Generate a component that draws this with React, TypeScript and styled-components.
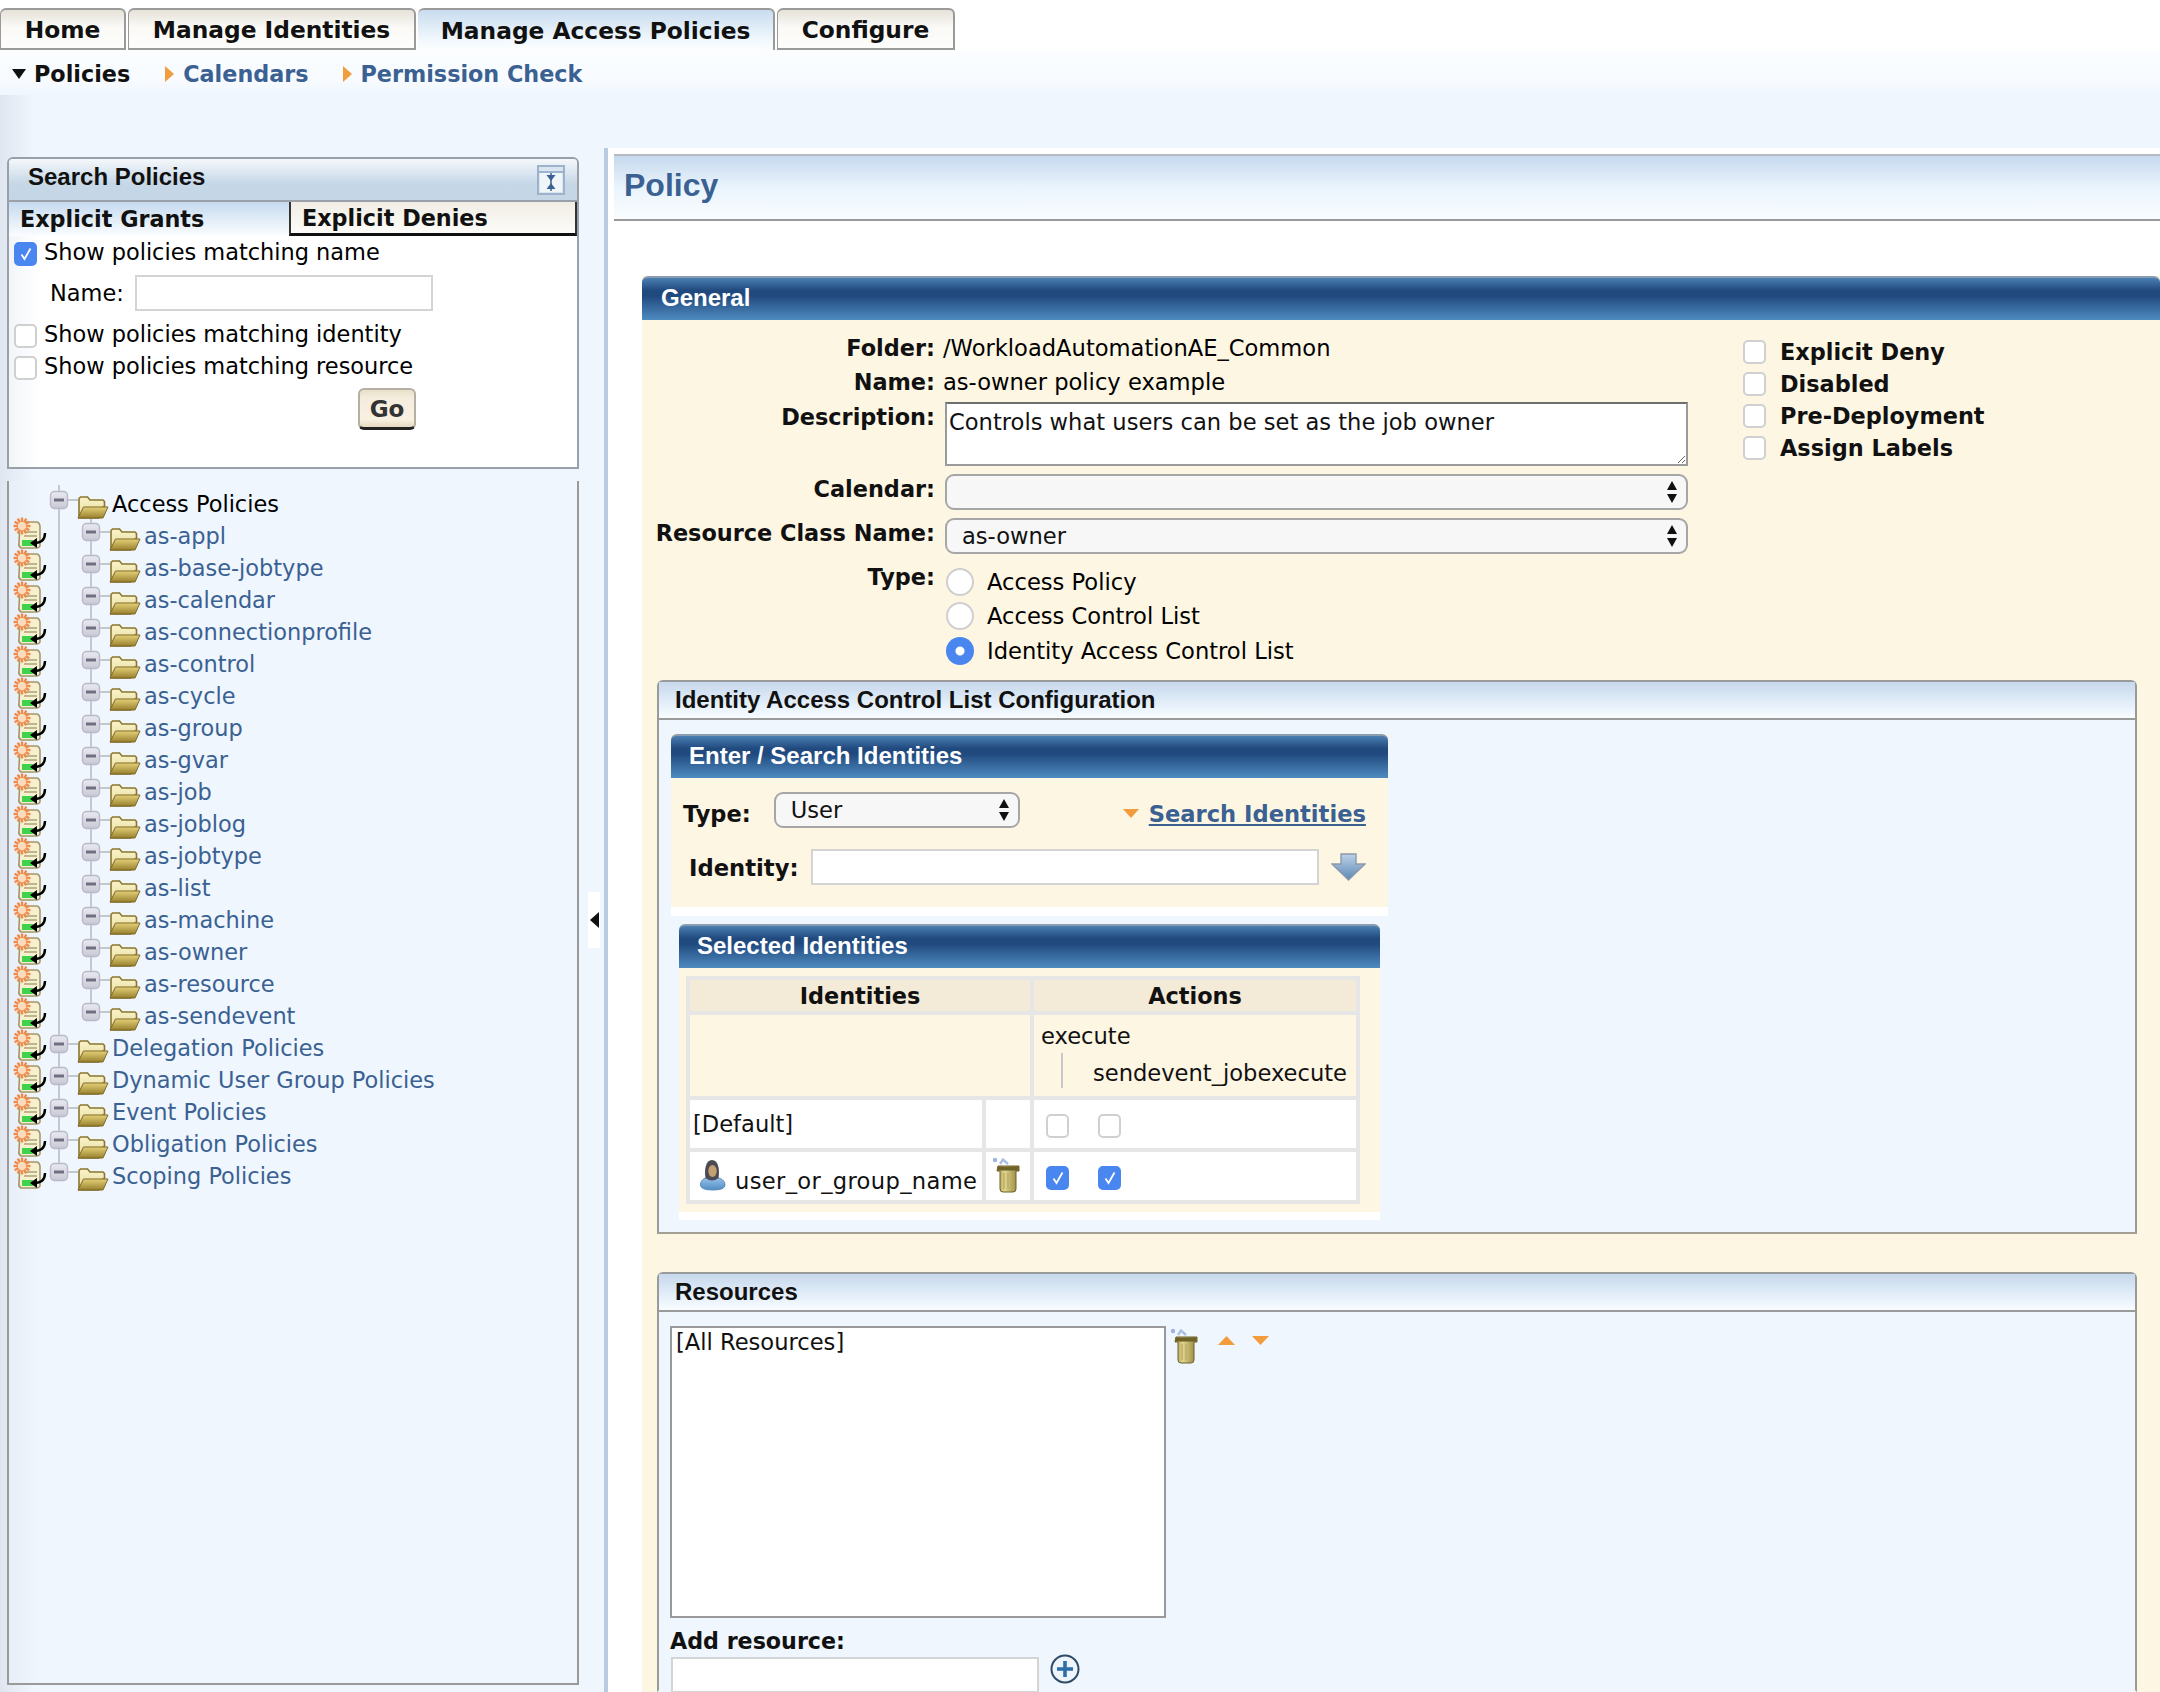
import React from 'react';
import styled, { createGlobalStyle } from 'styled-components';

const VERDANA = '"DejaVu Sans", Verdana, sans-serif';
const HELV = '"Liberation Sans", Arial, sans-serif';
const LINK = '#3a6192';
const PAGE = '#eff6fe';
const CREAM = '#fdf6e3';

const Global = createGlobalStyle`
  html, body { margin: 0; padding: 0; width: 2160px; height: 1692px; overflow: hidden; background: ${PAGE}; }
  body { font-family: ${VERDANA}; font-size: 22.6px; color: #000; }
  * { box-sizing: border-box; }
`;

const Page = styled.div`
  width: 2160px; height: 1692px; display: flex; flex-direction: column; overflow: hidden;
`;
const TabBar = styled.nav`
  display: flex; gap: 2px; height: 50px; padding-top: 8px; background: #fff; flex: none;
`;
const TopTab = styled.div<{ $w: number; $active?: boolean }>`
  width: ${p => p.$w}px; height: 42px; display: flex; align-items: center; justify-content: center;
  font-weight: bold; font-size: 23.3px; color: #111;
  border: 2px solid #9a9a9a; border-left-width: ${p => (p.$active ? 0 : 1)}px;
  border-bottom-width: ${p => (p.$active ? 0 : 2)}px;
  border-radius: 6px 6px 0 0;
  background: ${p => p.$active
    ? 'linear-gradient(#c9dcef, #f4fafe 80%, #fbfdff)'
    : 'linear-gradient(#e6e2d8, #faf9f6 45%, #fdfdfb)'};
`;
const SubNav = styled.nav`
  display: flex; align-items: center; height: 45px; padding-top: 2px; flex: none;
  background: linear-gradient(#fbfdff, #f7fbff 70%, ${PAGE});
`;
const SubItem = styled.div<{ $x: number; $gap: number; $active?: boolean }>`
  display: flex; align-items: center; gap: ${p => p.$gap}px; margin-left: ${p => p.$x}px;
  font-weight: bold; font-size: 22.3px; color: ${p => (p.$active ? '#111' : LINK)};
`;
const Main = styled.div`
  flex: 1; display: flex; min-height: 0;
`;
const Sidebar = styled.aside`
  width: 580px; flex: none; padding: 62px 0 0 7px; font-size: 22.45px;
  background: linear-gradient(90deg, #dfe6ef, ${PAGE} 34px);
`;
const SearchBox = styled.section`
  width: 572px; height: 312px; border: 2px solid #9aa0a8; border-radius: 6px 6px 0 0;
  background: linear-gradient(90deg, #f2f5f9, #fff 30px);
  display: flex; flex-direction: column;
`;
const SearchHead = styled.header`
  height: 41px; flex: none; display: flex; align-items: center; justify-content: space-between;
  padding: 0 12px 5px 19px;
  font: bold 24px ${HELV}; color: #111;
  background: linear-gradient(#f5f8fb, #c6d7e7 60%, #c4d5e6);
  border-radius: 4px 4px 0 0;
  svg { margin-top: 5px; }
`;
const SubTabs = styled.div`
  display: flex; height: 36px; flex: none; border-top: 2px solid #9aa0a8;
`;
const SubTab = styled.div<{ $active?: boolean }>`
  display: flex; align-items: center; font-weight: bold; font-size: 22.3px; color: #111;
  ${p => p.$active
    ? `width: 280px; padding-left: 11px; background: linear-gradient(#c6daef, #fbfdff);`
    : `flex: 1; padding-left: 11px; border-left: 2px solid #333; border-right: 2px solid #333; border-bottom: 3px solid #111;
       background: linear-gradient(#f0ede4, #fdfcf9);`}
`;
const SearchForm = styled.div`
  flex: 1; display: flex; flex-direction: column; padding: 3px 0 0 5px;
`;
const Option = styled.label<{ $top?: number }>`
  display: flex; align-items: flex-start; gap: 7px; height: 32px; line-height: 26px;
  margin-top: ${p => p.$top ?? 0}px;
  input { margin-top: 3px; }
`;
const NameRow = styled.div`
  display: flex; align-items: center; gap: 11px; height: 36px; margin: 4px 0 0 36px;
`;
const TextBox = styled.input.attrs({ type: 'text' })<{ $w: number }>`
  width: ${p => p.$w}px; height: 36px; border: 2px solid #d4d4d4; background: #fff; margin: 0; outline: none; flex: none;
`;
const GoRow = styled.div`
  display: flex; justify-content: flex-end; padding-right: 161px; margin-top: 3px;
`;
const GoButton = styled.button`
  width: 58px; height: 42px; padding: 0; font: bold 23px ${VERDANA}; color: #333;
  border: 2px solid #b5b0a3; border-bottom: 3px solid #222; border-radius: 6px;
  background: linear-gradient(#e9dfca, #f4ecdc 20%, #f8f0e0 80%, #e4d9c2);
`;
const TreeBox = styled.section`
  width: 572px; height: 1204px; margin-top: 12px; padding-top: 7px;
  border: 2px solid #9a9a9a; border-top: 0;
  background: linear-gradient(90deg, #e9eff7, ${PAGE} 34px);
`;
const TreeRow = styled.div<{ $active?: boolean }>`
  display: flex; align-items: center; height: 32px;
  color: ${p => (p.$active ? '#000' : LINK)};
  svg { flex: none; overflow: visible; align-self: flex-start; }
`;
const Splitter = styled.div`
  width: 28px; flex: none; margin-top: 53px; display: flex; align-items: center; justify-content: flex-start;
  padding-left: 8px; border-right: 4px solid #b9cbe0;
`;
const SplitHandle = styled.button`
  width: 12px; height: 56px; padding: 0; border: 0; background: #fff; display: flex; align-items: center; justify-content: center;
`;
const Content = styled.main`
  flex: 1; min-width: 0; margin-top: 53px; background: #fff; display: flex; flex-direction: column; padding-top: 6px;
`;
const PolicyHead = styled.h1`
  margin: 0 0 55px 6px; height: 67px; padding: 0 0 4px 10px; display: flex; align-items: center; flex: none;
  font: bold 32px ${HELV}; color: ${LINK};
  border-top: 2px solid #b8bcc2; border-bottom: 2px solid #9a9a9a;
  background: linear-gradient(#c6d9ee, #eaf4fc 50%, #fafdff);
`;
const GeneralPanel = styled.section`
  margin-left: 34px; flex: 1; display: flex; flex-direction: column; background: ${CREAM}; min-height: 0;
`;
const BlueBar = styled.header<{ $pad?: number }>`
  height: 44px; flex: none; display: flex; align-items: center; padding: 0 0 2px ${p => p.$pad ?? 18}px;
  font: bold 24px ${HELV}; color: #fff;
  border-top: 2px solid #8a9cb0; border-radius: 6px 6px 0 0;
  background: linear-gradient(#4b7fb2, #20497e 30%, #20497e 42%, #4f8bc0);
`;
const GeneralTop = styled.div`
  display: flex; padding-top: 11px; flex: none;
`;
const FormCol = styled.div`
  width: 1046px; flex: none;
`;
const FormRow = styled.div<{ $top?: number; $h: number }>`
  display: grid; grid-template-columns: 293px 1fr; column-gap: 8px; height: ${p => p.$h}px;
  margin-top: ${p => p.$top ?? 0}px; line-height: ${p => p.$h}px;
`;
const FieldLabel = styled.div<{ $lh?: number }>`
  text-align: right; font-weight: bold; font-size: 22.4px; color: #111;
  ${p => (p.$lh ? `line-height: ${p.$lh}px;` : '')}
`;
const Notes = styled.textarea`
  width: 743px; height: 64px; margin: 0 0 0 2px; padding: 3px 2px; display: block;
  font: 22.6px/30px ${VERDANA}; color: #111; background: #fff; outline: none;
  border: 2px solid #9a9a9a; border-top-color: #6f6f6f;
`;
const updown = `url("data:image/svg+xml,%3Csvg xmlns='http://www.w3.org/2000/svg' width='10' height='24'%3E%3Cpath d='M5 1l5 9H0zM5 23l5-9H0z' fill='%23111'/%3E%3C/svg%3E")`;
const DropDown = styled.select<{ $w: number; $left?: number }>`
  appearance: none; width: ${p => p.$w}px; height: 36px; margin: 0 0 0 ${p => p.$left ?? 0}px; padding: 0 30px 0 15px; flex: none;
  font: 22.6px ${VERDANA}; color: #111; display: block; outline: none;
  border: 2px solid #a6a6a6; border-radius: 9px;
  background: #f7f7f7 ${updown} no-repeat right 9px center;
`;
const RadioCol = styled.div`
  display: flex; flex-direction: column; padding-top: 1px; margin-left: 3px;
`;
const RadioRow = styled.label`
  display: flex; align-items: center; gap: 13px; height: 34.3px; line-height: 34px;
`;
const Radio = styled.input.attrs({ type: 'radio', name: 'ptype' })`
  appearance: none; margin: 0; width: 28px; height: 28px; border-radius: 50%; flex: none;
  border: 2px solid #cfcfcf; background: #fff;
  &:checked { border: 0; background: radial-gradient(circle, #fff 0 4px, #4a86ef 5px); }
`;
const checkmark = `url("data:image/svg+xml,%3Csvg xmlns='http://www.w3.org/2000/svg' width='16' height='16'%3E%3Cpath d='M3.5 8.5l3 4.5L12.5 2.5' fill='none' stroke='white' stroke-width='1.8'/%3E%3C/svg%3E")`;
const Check = styled.input.attrs({ type: 'checkbox' })`
  appearance: none; margin: 0; width: 23px; height: 24px; border-radius: 5px; flex: none;
  border: 2px solid #d0d0d0; background: #fff;
  &:checked { border-color: #4a86ef; background: #4a86ef ${checkmark} no-repeat center; }
`;
const FlagsCol = styled.div`
  margin-left: 55px; padding-top: 5px; display: flex; flex-direction: column;
`;
const Flag = styled.label`
  display: flex; align-items: center; gap: 14px; height: 32px; font-weight: bold; font-size: 22.4px; color: #111;
`;
const SubPanel = styled.section<{ $h?: number; $top: number }>`
  margin: ${p => p.$top}px 23px 0 15px; flex: ${p => (p.$h ? 'none' : '1')}; ${p => (p.$h ? `height: ${p.$h}px;` : 'min-height: 0;')}
  display: flex; flex-direction: column; background: ${PAGE};
  border: 2px solid #9a9a9a; border-bottom-color: ${p => (p.$h ? '#a39f92' : 'transparent')};
  border-radius: 6px 6px 0 0;
`;
const SubPanelHead = styled.header`
  height: 38px; flex: none; display: flex; align-items: center; padding-left: 16px;
  font: bold 24px ${HELV}; color: #111; border-bottom: 2px solid #9a9a9a;
  background: linear-gradient(#c6d8ec, #eef6fd 80%, #f8fcff);
`;
const EnterPanel = styled.section`
  width: 717px; margin: 14px 0 0 12px; border-bottom: 9px solid #fff; background: ${CREAM}; flex: none;
`;
const EnterBody = styled.div`
  height: 129px; padding: 14px 0 0 12px;
`;
const TypeRow = styled.div`
  display: flex; align-items: center; height: 36px; font-weight: bold; font-size: 22.5px; color: #111;
`;
const TypeCaption = styled.span`
  padding-top: 7px;
`;
const SearchLink = styled.a`
  margin-left: 10px; font-weight: bold; font-size: 22.6px; color: ${LINK}; text-decoration: underline; white-space: nowrap;
`;
const SearchToggle = styled.div`
  display: flex; align-items: center; margin-left: 103px; padding-top: 7px;
`;
const IdentityRow = styled.div`
  display: flex; align-items: center; height: 36px; margin: 21px 0 0 6px; font-weight: bold; font-size: 22.7px; color: #111;
  gap: 12px;
`;
const IdentityCaption = styled.span`
  padding-top: 2px;
`;
const SelectedPanel = styled.section`
  width: 701px; margin: 8px 0 0 20px; border-bottom: 8px solid #fff; flex: none;
`;
const SelectedBody = styled.div`
  height: 244px; padding: 8px 0 8px 7px; background: ${CREAM};
`;
const Grid = styled.table`
  width: 674px; height: 228px; table-layout: fixed; border-collapse: separate; border-spacing: 4px; background: #e6e6e6;
`;
const HeadCell = styled.th`
  height: 31px; padding: 0; background: #f3ead8; font-weight: bold; font-size: 22.4px; color: #111; text-align: center;
`;
const CreamCell = styled.td`
  padding: 0; background: ${CREAM};
`;
const WhiteCell = styled.td`
  padding: 0 0 0 3px; height: 48px; background: #fff; color: #111;
`;
const TrashSlot = styled.div`
  padding: 3px 0 0 3px;
`;
const ActionTree = styled.div`
  display: flex; flex-direction: column; padding: 0 0 0 7px; color: #111;
`;
const ActionChild = styled.div`
  margin: 4px 0 0 20px; padding: 5px 0 0 30px; border-left: 2px solid #c8c8c8; line-height: 30px;
`;
const BoxPair = styled.div`
  display: flex; gap: 29px; padding: 4px 0 0 9px; align-items: center;
`;
const UserCell = styled.div`
  display: flex; align-items: flex-start; gap: 9px; padding-left: 6px; white-space: nowrap; line-height: 30px; letter-spacing: .35px;
  svg { margin-top: 2px; flex: none; }
`;
const UserName = styled.span`
  padding-top: 9px;
`;
const ResourcesBody = styled.div`
  padding: 14px 0 0 11px;
`;
const ResourceRow = styled.div`
  display: flex; align-items: flex-start;
`;
const ListBox = styled.div`
  width: 496px; height: 292px; border: 2px solid #9a9a9a; background: #fff; padding: 0 4px; line-height: 28px; color: #111; flex: none;
`;
const Tools = styled.div`
  display: flex; align-items: flex-start; gap: 17px; margin-left: 4px; padding-top: 2px;
  & > svg:nth-child(n + 2) { margin-top: 8px; }
  & > svg:nth-child(2) { margin-left: 3px; }
`;
const AddLabel = styled.div`
  margin: 10px 0 0 0; font-weight: bold; font-size: 22.2px; line-height: 26px; color: #111;
`;
const AddRow = styled.div`
  display: flex; align-items: flex-start; gap: 11px; margin: 3px 0 0 1px;
  svg { margin-top: -3px; }
`;

const Tri: React.FC<{ dir: 'up' | 'down' | 'right'; color?: string; w: number; h: number }> = ({ dir, color = '#f39c3d', w, h }) => {
  const pts = dir === 'up' ? `0,${h} ${w},${h} ${w / 2},0` : dir === 'down' ? `0,0 ${w},0 ${w / 2},${h}` : `0,0 ${w},${h / 2} 0,${h}`;
  return <svg width={w} height={h}><polygon points={pts} fill={color} /></svg>;
};

const HiddenDefs = styled.svg`
  position: absolute; width: 0; height: 0;
`;
const Defs = () => (
  <HiddenDefs aria-hidden="true">
    <defs>
      <linearGradient id="folderFront" x1="0" y1="0" x2="0" y2="1">
        <stop offset="0" stopColor="#e6d27a" /><stop offset="1" stopColor="#98802c" />
      </linearGradient>
      <linearGradient id="folderBack" x1="0" y1="0" x2="0" y2="1">
        <stop offset="0" stopColor="#faf3c9" /><stop offset="1" stopColor="#e8d998" />
      </linearGradient>
      <linearGradient id="minusBox" x1="0" y1="0" x2="0" y2="1">
        <stop offset="0" stopColor="#e9e9f1" /><stop offset="1" stopColor="#c9c9d6" />
      </linearGradient>
      <linearGradient id="trashBody" x1="0" y1="0" x2="1" y2="0">
        <stop offset="0" stopColor="#a8974b" /><stop offset=".35" stopColor="#e0d48f" /><stop offset="1" stopColor="#8f7f3a" />
      </linearGradient>
      <linearGradient id="arrowFill" x1="0" y1="0" x2="0" y2="1">
        <stop offset="0" stopColor="#bdd1e8" /><stop offset="1" stopColor="#5a88b6" />
      </linearGradient>
      <linearGradient id="userBody" x1="0" y1="0" x2="0" y2="1">
        <stop offset="0" stopColor="#9cc6ec" /><stop offset="1" stopColor="#4f8cc4" />
      </linearGradient>
    </defs>
  </HiddenDefs>
);

const FolderGlyph = ({ x }: { x: number }) => (
  <g transform={`translate(${x} 8)`}>
    <path d="M1 22V2.5L2.5 1h7L12 4h13l1.5 1.5V11H25L21 22Z" fill="url(#folderBack)" stroke="#8b7631" strokeWidth="1.6" />
    <path d="M0 22L5.5 11H30L25 22Z" fill="url(#folderFront)" stroke="#7f6b28" strokeWidth="1" />
  </g>
);
const MinusGlyph = ({ x }: { x: number }) => (
  <g>
    <rect x={x - 8.5} y="3.5" width="17" height="17" rx="4" fill="url(#minusBox)" stroke="#b9b9c9" strokeWidth="1.4" />
    <rect x={x - 5} y="10.5" width="10" height="3" fill="#6f6f80" />
  </g>
);
const Burst = () => (
  <g transform="translate(8 8)">
    {[0, 30, 60, 90, 120, 150].map(a => (
      <rect key={a} x="-8.5" y="-1.2" width="17" height="2.4" fill="#ee8a4a" transform={`rotate(${a})`} />
    ))}
    <circle r="4.6" fill="#fcdcbc" stroke="#f09860" strokeWidth="1" />
  </g>
);
const Badge = () => (
  <g transform="translate(5 -2)">
    <path d="M6 4H23Q26 5 26 9V27Q26 30 22 30H7Q4 28 5 25Z" fill="#f6f0d0" stroke="#a3986a" strokeWidth="1.6" />
    <path d="M10 14H23M10 18H23" stroke="#aaa177" strokeWidth="1.6" />
    <rect x="8" y="22" width="11" height="6" fill="#3fd24a" />
    <Burst />
    <path d="M31 15C31 22 27 25 20 25" fill="none" stroke="#000" strokeWidth="2.4" />
    <path d="M16 25L23 20V30Z" fill="#000" />
  </g>
);

const TreeGlyph: React.FC<{ depth: 0 | 1; badge?: boolean; first?: boolean; last?: boolean; lastRoot?: boolean }> = ({ depth, badge, first, last, lastRoot }) => {
  const w = depth === 0 ? 103 : 135;
  const bx = depth === 0 ? 50 : 82;
  const fx = depth === 0 ? 69 : 101;
  return (
    <svg width={w} height={32}>
      <g stroke="#c2c7d2" strokeWidth="2" fill="none">
        <path d={`M50 ${first ? -3 : 0}V${lastRoot ? 12 : 32}`} />
        {depth === 1 && <path d={`M82 0V${last ? 12 : 32}`} />}
        <path d={`M${bx} 12H${fx}`} />
        {first && <path d="M82 30V32" />}
      </g>
      {badge && <Badge />}
      <MinusGlyph x={bx} />
      <FolderGlyph x={fx} />
    </svg>
  );
};

const TrashIcon = () => (
  <svg width="28" height="36" viewBox="0 0 28 36">
    <circle cx="3" cy="3" r="2.2" fill="#9db4e0" />
    <path d="M8 7L11 2.5L16 7" fill="none" stroke="#a9bfe6" strokeWidth="2.4" />
    <path d="M6 9H27V14H24V32Q24 35 21 35H11Q8 35 8 32V14H5Z" fill="url(#trashBody)" stroke="#6d6029" strokeWidth="1" />
    <rect x="5.5" y="9.5" width="21" height="4" fill="#6e6227" />
    <path d="M12 16V32M16 16V32M20 16V32" stroke="#b9a95e" strokeWidth="1.2" />
  </svg>
);
const UserIcon = () => (
  <svg width="27" height="32" viewBox="0 0 27 32">
    <path d="M1.5 26C1.5 20 7 18 13 18S26 20 26 26Q26 31 14 31Q1.5 31 1.5 26Z" fill="url(#userBody)" stroke="#5b8cb8" />
    <path d="M6.5 19C5 10 7 1 13 1S21 10 19.5 19Q13 24 6.5 19Z" fill="#4c4a52" />
    <ellipse cx="13.5" cy="12" rx="4.2" ry="6" fill="#c2a071" />
  </svg>
);
const DropArrow = () => (
  <svg width="35" height="28" viewBox="0 0 35 28">
    <path d="M10 1H25V11H34L17.5 27L1 11H10Z" fill="url(#arrowFill)" stroke="#8d99a8" strokeWidth="1.4" />
  </svg>
);
const CollapseIcon = () => (
  <svg width="28" height="30" viewBox="0 0 28 30">
    <rect x="1" y="1" width="26" height="28" fill="#d9e5f1" stroke="#9db2cb" strokeWidth="2" />
    <rect x="3" y="8" width="22" height="19" fill="#f0f5fa" />
    <path d="M2 7H26" stroke="#9db2cb" strokeWidth="2" />
    <path d="M9.5 10H18.5L14 16ZM9.5 24H18.5L14 18Z" fill="#3a6192" />
    <path d="M14 8V26" stroke="#3a6192" strokeWidth="1.5" />
  </svg>
);
const PlusCircle = () => (
  <svg width="30" height="30" viewBox="0 0 30 30">
    <circle cx="15" cy="15" r="13.5" fill="#eef4fb" stroke="#2e4a66" strokeWidth="2" />
    <path d="M15 7V23M7 15H23" stroke="#2c6ea8" strokeWidth="3.6" />
  </svg>
);

const children = ['as-appl', 'as-base-jobtype', 'as-calendar', 'as-connectionprofile', 'as-control', 'as-cycle', 'as-group', 'as-gvar', 'as-job', 'as-joblog', 'as-jobtype', 'as-list', 'as-machine', 'as-owner', 'as-resource', 'as-sendevent'];
const roots = ['Delegation Policies', 'Dynamic User Group Policies', 'Event Policies', 'Obligation Policies', 'Scoping Policies'];

export default function App() {
  return (
    <Page>
      <Global />
      <Defs />
      <TabBar>
        <TopTab $w={126}>Home</TopTab>
        <TopTab $w={288}>Manage Identities</TopTab>
        <TopTab $w={357} $active>Manage Access Policies</TopTab>
        <TopTab $w={178}>Configure</TopTab>
      </TabBar>
      <SubNav>
        <SubItem $x={12} $gap={8} $active><Tri dir="down" color="#111" w={14} h={10} />Policies</SubItem>
        <SubItem $x={35} $gap={9}><Tri dir="right" w={9} h={16} />Calendars</SubItem>
        <SubItem $x={34} $gap={9}><Tri dir="right" w={9} h={16} />Permission Check</SubItem>
      </SubNav>
      <Main>
        <Sidebar>
          <SearchBox>
            <SearchHead>Search Policies<CollapseIcon /></SearchHead>
            <SubTabs>
              <SubTab $active>Explicit Grants</SubTab>
              <SubTab>Explicit Denies</SubTab>
            </SubTabs>
            <SearchForm>
              <Option><Check defaultChecked />Show policies matching name</Option>
              <NameRow>Name:<TextBox $w={298} /></NameRow>
              <Option $top={10}><Check />Show policies matching identity</Option>
              <Option><Check />Show policies matching resource</Option>
              <GoRow><GoButton>Go</GoButton></GoRow>
            </SearchForm>
          </SearchBox>
          <TreeBox>
            <TreeRow $active><TreeGlyph depth={0} first />Access Policies</TreeRow>
            {children.map((c, i) => (
              <TreeRow key={c}><TreeGlyph depth={1} badge last={i === children.length - 1} />{c}</TreeRow>
            ))}
            {roots.map((r, i) => (
              <TreeRow key={r}><TreeGlyph depth={0} badge lastRoot={i === roots.length - 1} />{r}</TreeRow>
            ))}
          </TreeBox>
        </Sidebar>
        <Splitter>
          <SplitHandle aria-label="Collapse"><svg width="9" height="16"><polygon points="9,0 9,16 0,8" fill="#111" /></svg></SplitHandle>
        </Splitter>
        <Content>
          <PolicyHead>Policy</PolicyHead>
          <GeneralPanel>
            <BlueBar $pad={19}>General</BlueBar>
            <GeneralTop>
              <FormCol>
                <FormRow $h={34}><FieldLabel>Folder:</FieldLabel><div>/WorkloadAutomationAE_Common</div></FormRow>
                <FormRow $h={34}><FieldLabel>Name:</FieldLabel><div>as-owner policy example</div></FormRow>
                <FormRow $h={64} $top={3}>
                  <FieldLabel $lh={30}>Description:</FieldLabel>
                  <Notes defaultValue="Controls what users can be set as the job owner" />
                </FormRow>
                <FormRow $h={36} $top={8}>
                  <FieldLabel $lh={30}>Calendar:</FieldLabel>
                  <DropDown $w={743} $left={2}><option></option></DropDown>
                </FormRow>
                <FormRow $h={36} $top={8}>
                  <FieldLabel $lh={30}>Resource Class Name:</FieldLabel>
                  <DropDown $w={743} $left={2}><option>as-owner</option></DropDown>
                </FormRow>
                <FormRow $h={104} $top={10}>
                  <FieldLabel $lh={26}>Type:</FieldLabel>
                  <RadioCol>
                    <RadioRow><Radio />Access Policy</RadioRow>
                    <RadioRow><Radio />Access Control List</RadioRow>
                    <RadioRow><Radio defaultChecked />Identity Access Control List</RadioRow>
                  </RadioCol>
                </FormRow>
              </FormCol>
              <FlagsCol>
                <Flag><Check />Explicit Deny</Flag>
                <Flag><Check />Disabled</Flag>
                <Flag><Check />Pre-Deployment</Flag>
                <Flag><Check />Assign Labels</Flag>
              </FlagsCol>
            </GeneralTop>
            <SubPanel $h={554} $top={12}>
              <SubPanelHead>Identity Access Control List Configuration</SubPanelHead>
              <EnterPanel>
                <BlueBar>Enter / Search Identities</BlueBar>
                <EnterBody>
                  <TypeRow>
                    <TypeCaption>Type:</TypeCaption>
                    <DropDown $w={246} $left={23}><option>User</option></DropDown>
                    <SearchToggle><Tri dir="down" w={16} h={9} /><SearchLink>Search Identities</SearchLink></SearchToggle>
                  </TypeRow>
                  <IdentityRow><IdentityCaption>Identity:</IdentityCaption><TextBox $w={508} /><DropArrow /></IdentityRow>
                </EnterBody>
              </EnterPanel>
              <SelectedPanel>
                <BlueBar>Selected Identities</BlueBar>
                <SelectedBody>
                  <Grid>
                    <colgroup><col width="292" /><col width="44" /><col width="322" /></colgroup>
                    <thead>
                      <tr><HeadCell colSpan={2}>Identities</HeadCell><HeadCell>Actions</HeadCell></tr>
                    </thead>
                    <tbody>
                      <tr>
                        <CreamCell colSpan={2} />
                        <CreamCell>
                          <ActionTree>
                            execute
                            <ActionChild>sendevent_jobexecute</ActionChild>
                          </ActionTree>
                        </CreamCell>
                      </tr>
                      <tr>
                        <WhiteCell>[Default]</WhiteCell>
                        <WhiteCell />
                        <WhiteCell><BoxPair><Check /><Check /></BoxPair></WhiteCell>
                      </tr>
                      <tr>
                        <WhiteCell><UserCell><UserIcon /><UserName>user_or_group_name</UserName></UserCell></WhiteCell>
                        <WhiteCell><TrashSlot><TrashIcon /></TrashSlot></WhiteCell>
                        <WhiteCell><BoxPair><Check defaultChecked /><Check defaultChecked /></BoxPair></WhiteCell>
                      </tr>
                    </tbody>
                  </Grid>
                </SelectedBody>
              </SelectedPanel>
            </SubPanel>
            <SubPanel $top={38}>
              <SubPanelHead>Resources</SubPanelHead>
              <ResourcesBody>
                <ResourceRow>
                  <ListBox>[All Resources]</ListBox>
                  <Tools>
                    <TrashIcon />
                    <Tri dir="up" w={17} h={9} />
                    <Tri dir="down" w={17} h={9} />
                  </Tools>
                </ResourceRow>
                <AddLabel>Add resource:</AddLabel>
                <AddRow>
                  <TextBox $w={368} />
                  <PlusCircle />
                </AddRow>
              </ResourcesBody>
            </SubPanel>
          </GeneralPanel>
        </Content>
      </Main>
    </Page>
  );
}
